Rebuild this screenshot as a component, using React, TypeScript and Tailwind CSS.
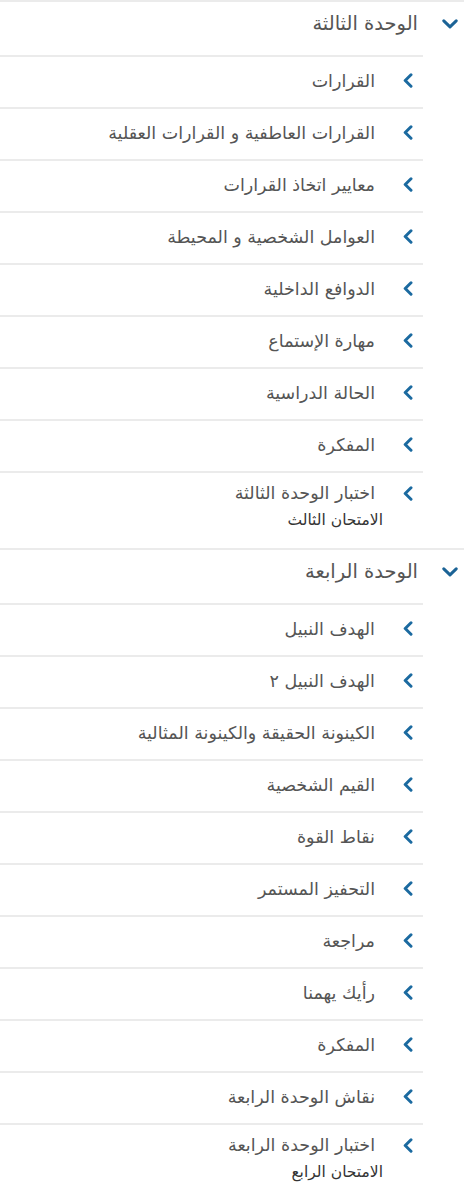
const units = [
  {
    title: "الوحدة الثالثة",
    items: [
      { title: "القرارات" },
      { title: "القرارات العاطفية و القرارات العقلية" },
      { title: "معايير اتخاذ القرارات" },
      { title: "العوامل الشخصية و المحيطة" },
      { title: "الدوافع الداخلية" },
      { title: "مهارة الإستماع" },
      { title: "الحالة الدراسية" },
      { title: "المفكرة" },
      { title: "اختبار الوحدة الثالثة", sub: "الامتحان الثالث" },
    ],
  },
  {
    title: "الوحدة الرابعة",
    items: [
      { title: "الهدف النبيل" },
      { title: "الهدف النبيل ٢" },
      { title: "الكينونة الحقيقة والكينونة المثالية" },
      { title: "القيم الشخصية" },
      { title: "نقاط القوة" },
      { title: "التحفيز المستمر" },
      { title: "مراجعة" },
      { title: "رأيك يهمنا" },
      { title: "المفكرة" },
      { title: "نقاش الوحدة الرابعة" },
      { title: "اختبار الوحدة الرابعة", sub: "الامتحان الرابع" },
    ],
  },
];

const ChevronDown = () => (
  <svg width="16" height="10" viewBox="0 0 16 10" className="shrink-0">
    <path d="M1.8 1.8 L8 7.8 L14.2 1.8" fill="none" stroke="#1b6396" strokeWidth="3" strokeLinecap="round" strokeLinejoin="round" />
  </svg>
);

const ChevronLeft = () => (
  <svg width="10" height="15" viewBox="0 0 10 15" className="shrink-0">
    <path d="M8 1.8 L2.2 7.5 L8 13.2" fill="none" stroke="#1b6aa0" strokeWidth="3" strokeLinecap="round" strokeLinejoin="round" />
  </svg>
);

export default function App() {
  return (
    <div
      dir="rtl"
      className="w-[464px] bg-white"
      style={{ fontFamily: '"DejaVu Sans", sans-serif' }}
    >
      {units.map((unit) => (
        <div key={unit.title} className="border-t-2 border-[#ebebeb]">
          <div className="flex items-center h-[53px] pb-[10px] pr-[6px] gap-[24px]">
            <ChevronDown />
            <span className="text-[19.5px] leading-[26px] text-[#555]">{unit.title}</span>
          </div>
          <div className="w-[423px] mr-auto">
            {unit.items.map((item, i) =>
              item.sub ? (
                <div key={i} className="border-t-2 border-[#ebebeb] h-[77px] flex items-start pt-[8px] pr-[10px] gap-[28px]">
                  <div className="h-[24px] flex items-center">
                    <ChevronLeft />
                  </div>
                  <div className="flex flex-col">
                    <span className="text-[17.5px] leading-[24px] text-[#555]">{item.title}</span>
                    <span className="text-[15.5px] leading-[20px] mt-[5px] mr-[-8px] text-[#333]">{item.sub}</span>
                  </div>
                </div>
              ) : (
                <div key={i} className="border-t-2 border-[#ebebeb] h-[52px] flex items-center pb-[3px] pr-[10px] gap-[28px]">
                  <ChevronLeft />
                  <span className="text-[17.5px] leading-[24px] text-[#555]">{item.title}</span>
                </div>
              )
            )}
          </div>
        </div>
      ))}
    </div>
  );
}
